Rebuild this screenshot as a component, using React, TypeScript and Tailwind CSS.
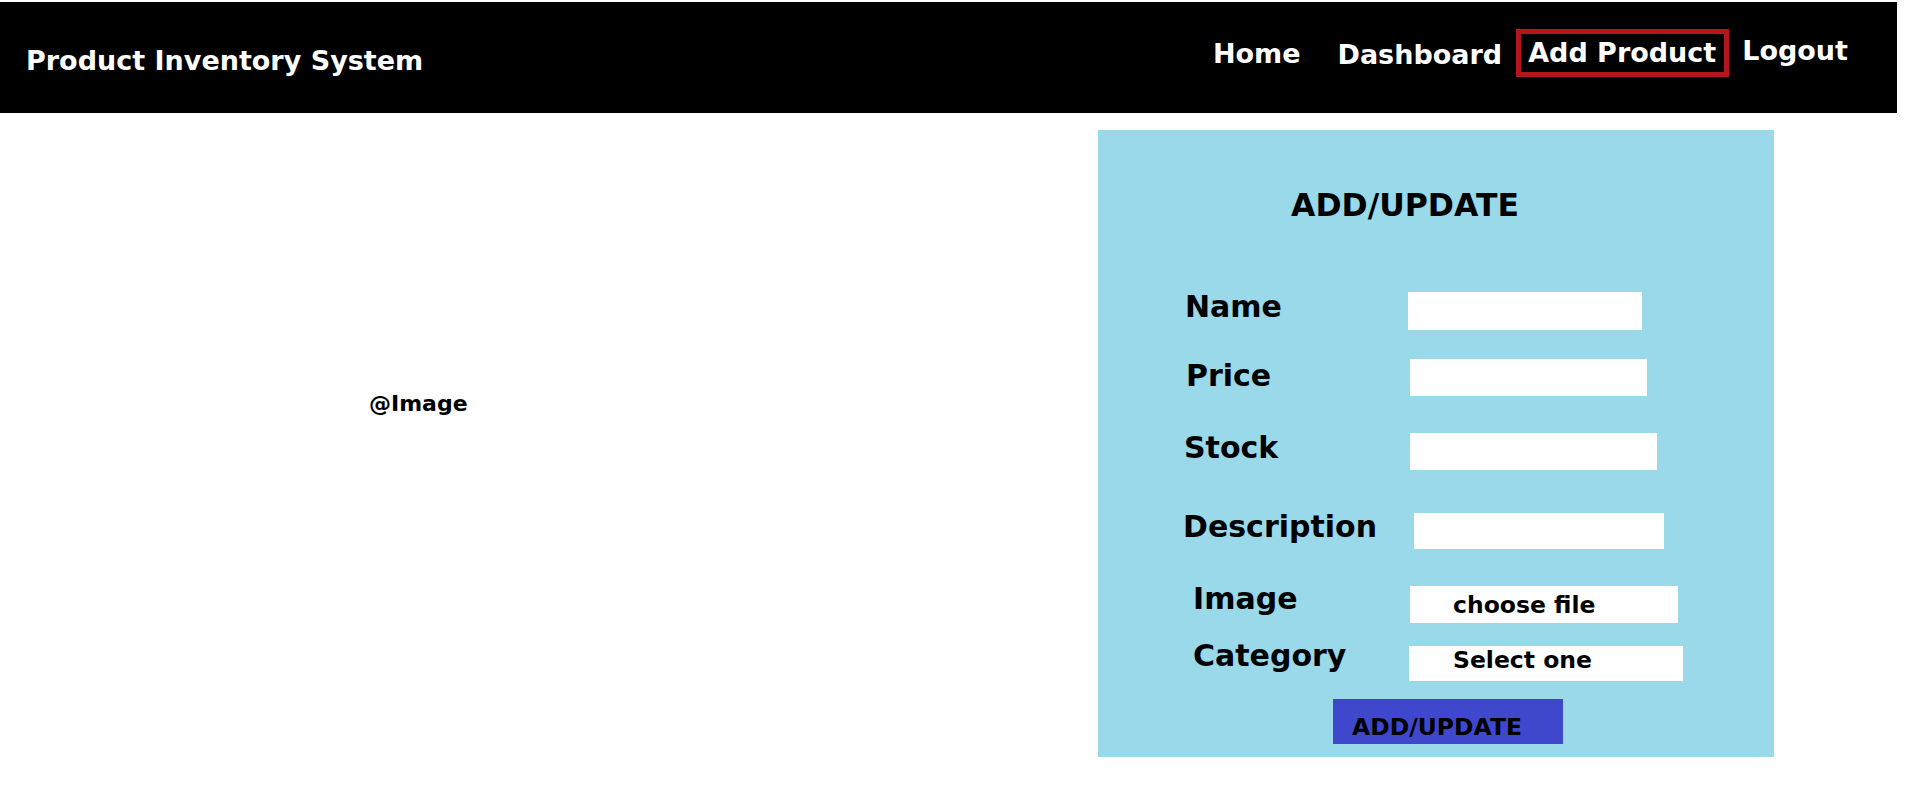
import React from "react";

const labelCls = "text-[30px] leading-none font-bold text-black shrink-0";

export default function App() {
  return (
    <div className="w-[1906px] h-[811px] overflow-hidden bg-white font-['DejaVu_Sans',sans-serif] font-bold">
      {/* Header */}
      <header className="mt-[2px] h-[111px] w-[1897px] bg-black flex items-start text-white">
        <div className="ml-[26px] mt-[45px] text-[27px] leading-none">Product Inventory System</div>
        <nav className="ml-auto mr-[49px] flex items-start">
          <a className="mt-[38px] text-[27px] leading-none">Home</a>
          <a className="ml-[37px] mt-[39px] text-[27px] leading-none">Dashboard</a>
          <a className="ml-[14px] mt-[27px] border-[5px] border-[#b5161e] pl-[7px] pr-[8px] pt-[5px] pb-[6px] text-[27px] leading-none">
            Add Product
          </a>
          <a className="ml-[13px] mt-[35px] text-[27px] leading-none">Logout</a>
        </nav>
      </header>

      {/* Main */}
      <main className="flex items-start">
        <div className="w-[1098px] shrink-0">
          <div className="ml-[369px] mt-[280px] text-[22px] leading-none text-black">@Image</div>
        </div>

        <section className="mt-[17px] w-[676px] h-[627px] bg-[#99d9ea] flex flex-col items-start shrink-0">
          <h2 className="ml-[193px] mt-[60px] text-[31.5px] leading-none text-black">ADD/UPDATE</h2>

          {/* Name */}
          <div className="mt-[70px] flex items-start">
            <span className={`ml-[87px] w-[223px] ${labelCls}`}>Name</span>
            <div className="w-[234px] h-[38px] bg-white" />
          </div>

          {/* Price */}
          <div className="mt-[29px] flex items-start">
            <span className={`ml-[88px] mt-[2px] w-[224px] ${labelCls}`}>Price</span>
            <div className="w-[237px] h-[37px] bg-white" />
          </div>

          {/* Stock */}
          <div className="mt-[37px] flex items-start">
            <span className={`ml-[86px] w-[226px] ${labelCls}`}>Stock</span>
            <div className="w-[247px] h-[37px] bg-white" />
          </div>

          {/* Description */}
          <div className="mt-[42px] flex items-start">
            <span className={`ml-[85px] w-[231px] ${labelCls}`}>Description</span>
            <div className="mt-[1px] w-[250px] h-[36px] bg-white" />
          </div>

          {/* Image */}
          <div className="mt-[35px] flex items-start">
            <span className={`ml-[95px] w-[217px] ${labelCls}`}>Image</span>
            <div className="mt-[2px] w-[268px] h-[37px] bg-white pl-[43px] pt-[8px] text-[23.5px] leading-none text-black">
              choose file
            </div>
          </div>

          {/* Category */}
          <div className="mt-[18px] flex items-start">
            <span className={`ml-[95px] w-[216px] ${labelCls}`}>Category</span>
            <div className="mt-[5px] w-[274px] h-[35px] bg-white pl-[44px] pt-[3px] text-[23.5px] leading-none text-black">
              Select one
            </div>
          </div>

          {/* Button */}
          <button className="ml-[235px] mt-[18px] w-[230px] h-[45px] bg-[#3f48cc] pl-[19px] pt-[17px] text-left text-[23.5px] leading-none text-black flex items-start">
            ADD/UPDATE
          </button>
        </section>
      </main>
    </div>
  );
}
